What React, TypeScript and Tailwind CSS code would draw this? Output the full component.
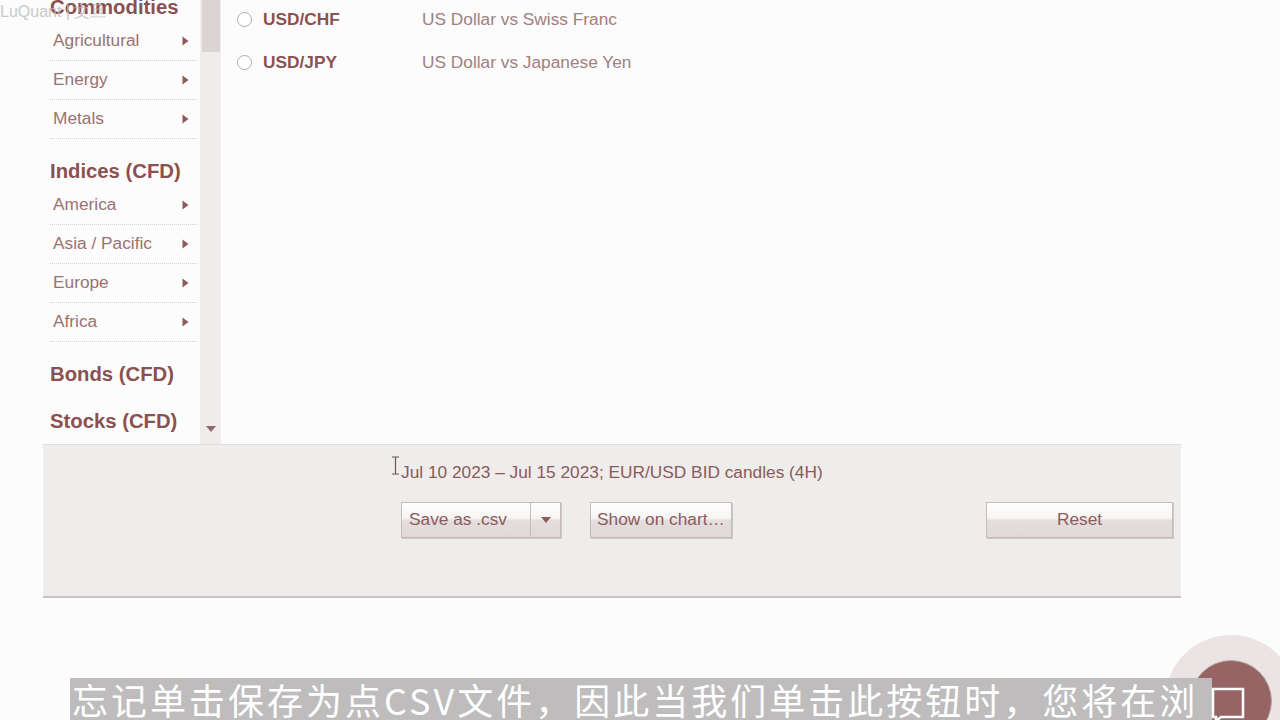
import React from "react";

const Arrow = () => (
  <svg width="7" height="10" viewBox="0 0 7 10">
    <path d="M0.5 0.5 L6.5 5 L0.5 9.5Z" fill="#8e5a5a" />
  </svg>
);

const Heading = ({ children }: { children: React.ReactNode }) => (
  <div className="pt-[20px] pb-[3px] leading-[24px] text-[20.3px] font-bold text-[#8b5050]">{children}</div>
);

const Item = ({ label }: { label: string }) => (
  <div className="h-[39px] flex items-center justify-between pl-[3px] pr-[8px] border-b border-dotted border-[#d8cdcd] text-[17.3px] text-[#9a7272]">
    <span>{label}</span>
    <Arrow />
  </div>
);

const Pair = ({ sym, desc }: { sym: string; desc: string }) => (
  <div className="h-[43px] flex items-center">
    <div className="w-[15px] h-[15px] rounded-full border border-[#acacac] bg-white" />
    <div className="ml-[11px] w-[159px] text-[17.3px] font-bold text-[#8b5252]">{sym}</div>
    <div className="text-[17.3px] text-[#a08080]">{desc}</div>
  </div>
);

const btn =
  "h-[36px] border border-[#c4bbbb] shadow-[1px_1px_0_#cfc7c7] bg-[linear-gradient(to_bottom,#fefdfd_0%,#f8f5f5_44%,#e3dddd_52%,#dfd9d9_100%)] text-[17.3px] text-[#8e5a5a] flex items-center";

export default function App() {
  return (
    <div
      className="relative w-[1280px] h-[720px] overflow-hidden bg-[#fcfcfc]"
      style={{ fontFamily: '"Liberation Sans", Arial, sans-serif' }}
    >
      <div className="flex h-[444px]">
        {/* sidebar */}
        <div className="w-[200px] h-[444px] overflow-hidden">
          <div className="-mt-[25px] pl-[50px] pr-[3px]">
            <Heading>Commodities</Heading>
            <Item label="Agricultural" />
            <Item label="Energy" />
            <Item label="Metals" />
            <Heading>Indices (CFD)</Heading>
            <Item label="America" />
            <Item label="Asia / Pacific" />
            <Item label="Europe" />
            <Item label="Africa" />
            <Heading>Bonds (CFD)</Heading>
            <Heading>Stocks (CFD)</Heading>
          </div>
        </div>
        {/* scrollbar */}
        <div className="w-[21px] h-[444px] bg-[#f0ecec] flex flex-col justify-between items-center">
          <div className="w-[18px] h-[52px] bg-[#dad4d4]" />
          <div className="mb-[12px]">
            <svg width="10" height="6" viewBox="0 0 10 6">
              <path d="M0 0 L10 0 L5 6Z" fill="#8e6a6a" />
            </svg>
          </div>
        </div>
        {/* main list */}
        <div className="flex-1 pl-[16px] -mt-[2px]">
          <Pair sym="USD/CHF" desc="US Dollar vs Swiss Franc" />
          <Pair sym="USD/JPY" desc="US Dollar vs Japanese Yen" />
        </div>
      </div>

      {/* bottom panel */}
      <div className="ml-[43px] w-[1138px] h-[154px] border-t border-[#e4dddd] border-b-2 border-b-[#cbc3c3] bg-[#efecec] pl-[358px] pr-[8px] pt-[15px]">
        <div className="leading-[24px] text-[17.3px] text-[#8b5a5a]">
          Jul 10 2023 – Jul 15 2023; EUR/USD BID candles (4H)
        </div>
        <div className="mt-[18px] flex items-start">
          <div className={btn + " w-[160px]"}>
            <div className="w-[129px] pl-[7px] h-full flex items-center border-r border-[#c4bbbb]">Save as .csv</div>
            <div className="flex-1 flex items-center justify-center">
              <svg width="10" height="6" viewBox="0 0 10 6">
                <path d="M0 0 L10 0 L5 6Z" fill="#8e5a5a" />
              </svg>
            </div>
          </div>
          <div className={btn + " ml-[29px] w-[142px] pl-[6px]"}>Show on chart…</div>
          <div className={btn + " ml-auto w-[187px] justify-center"}>Reset</div>
        </div>
      </div>

      {/* text cursor */}
      <svg className="absolute left-[391px] top-[456px]" width="9" height="19" viewBox="0 0 9 19">
        <path d="M1 1 H8 M4.5 1 V18 M1 18 H8" stroke="#6e5454" strokeWidth="1.2" fill="none" />
      </svg>

      {/* watermark */}
      <div className="absolute left-0 top-[2px] text-[16px] leading-[20px] text-[#bdbdbd] opacity-80 pointer-events-none">
        LuQuant | 文旦
      </div>

      {/* floating circle */}
      <div className="absolute left-[1165px] top-[635px] w-[132px] h-[132px] rounded-full bg-[#ece4e4]" />
      <div className="absolute left-[1190px] top-[660px] w-[82px] h-[82px] rounded-full bg-[#966464] border border-[#b9a9a9]" />

      {/* subtitle */}
      <div
        className="absolute left-[70px] top-[678px] w-[1142px] h-[42px] bg-[#bebcbc] text-white text-[36px] leading-[42px] tracking-[3px] pl-[2px] whitespace-nowrap overflow-hidden"
        style={{ fontFamily: '"Noto Sans CJK SC", "Noto Sans", sans-serif' }}
      >
        忘记单击保存为点CSV文件，因此当我们单击此按钮时，您将在浏
      </div>

      {/* chat icon */}
      <svg className="absolute left-[1211px] top-[687px]" width="34" height="34" viewBox="0 0 34 34">
        <path d="M2 2 H32 V30 H10 L5 34 V30 H2 Z" stroke="#ffffff" strokeWidth="2.5" fill="none" />
      </svg>
    </div>
  );
}
